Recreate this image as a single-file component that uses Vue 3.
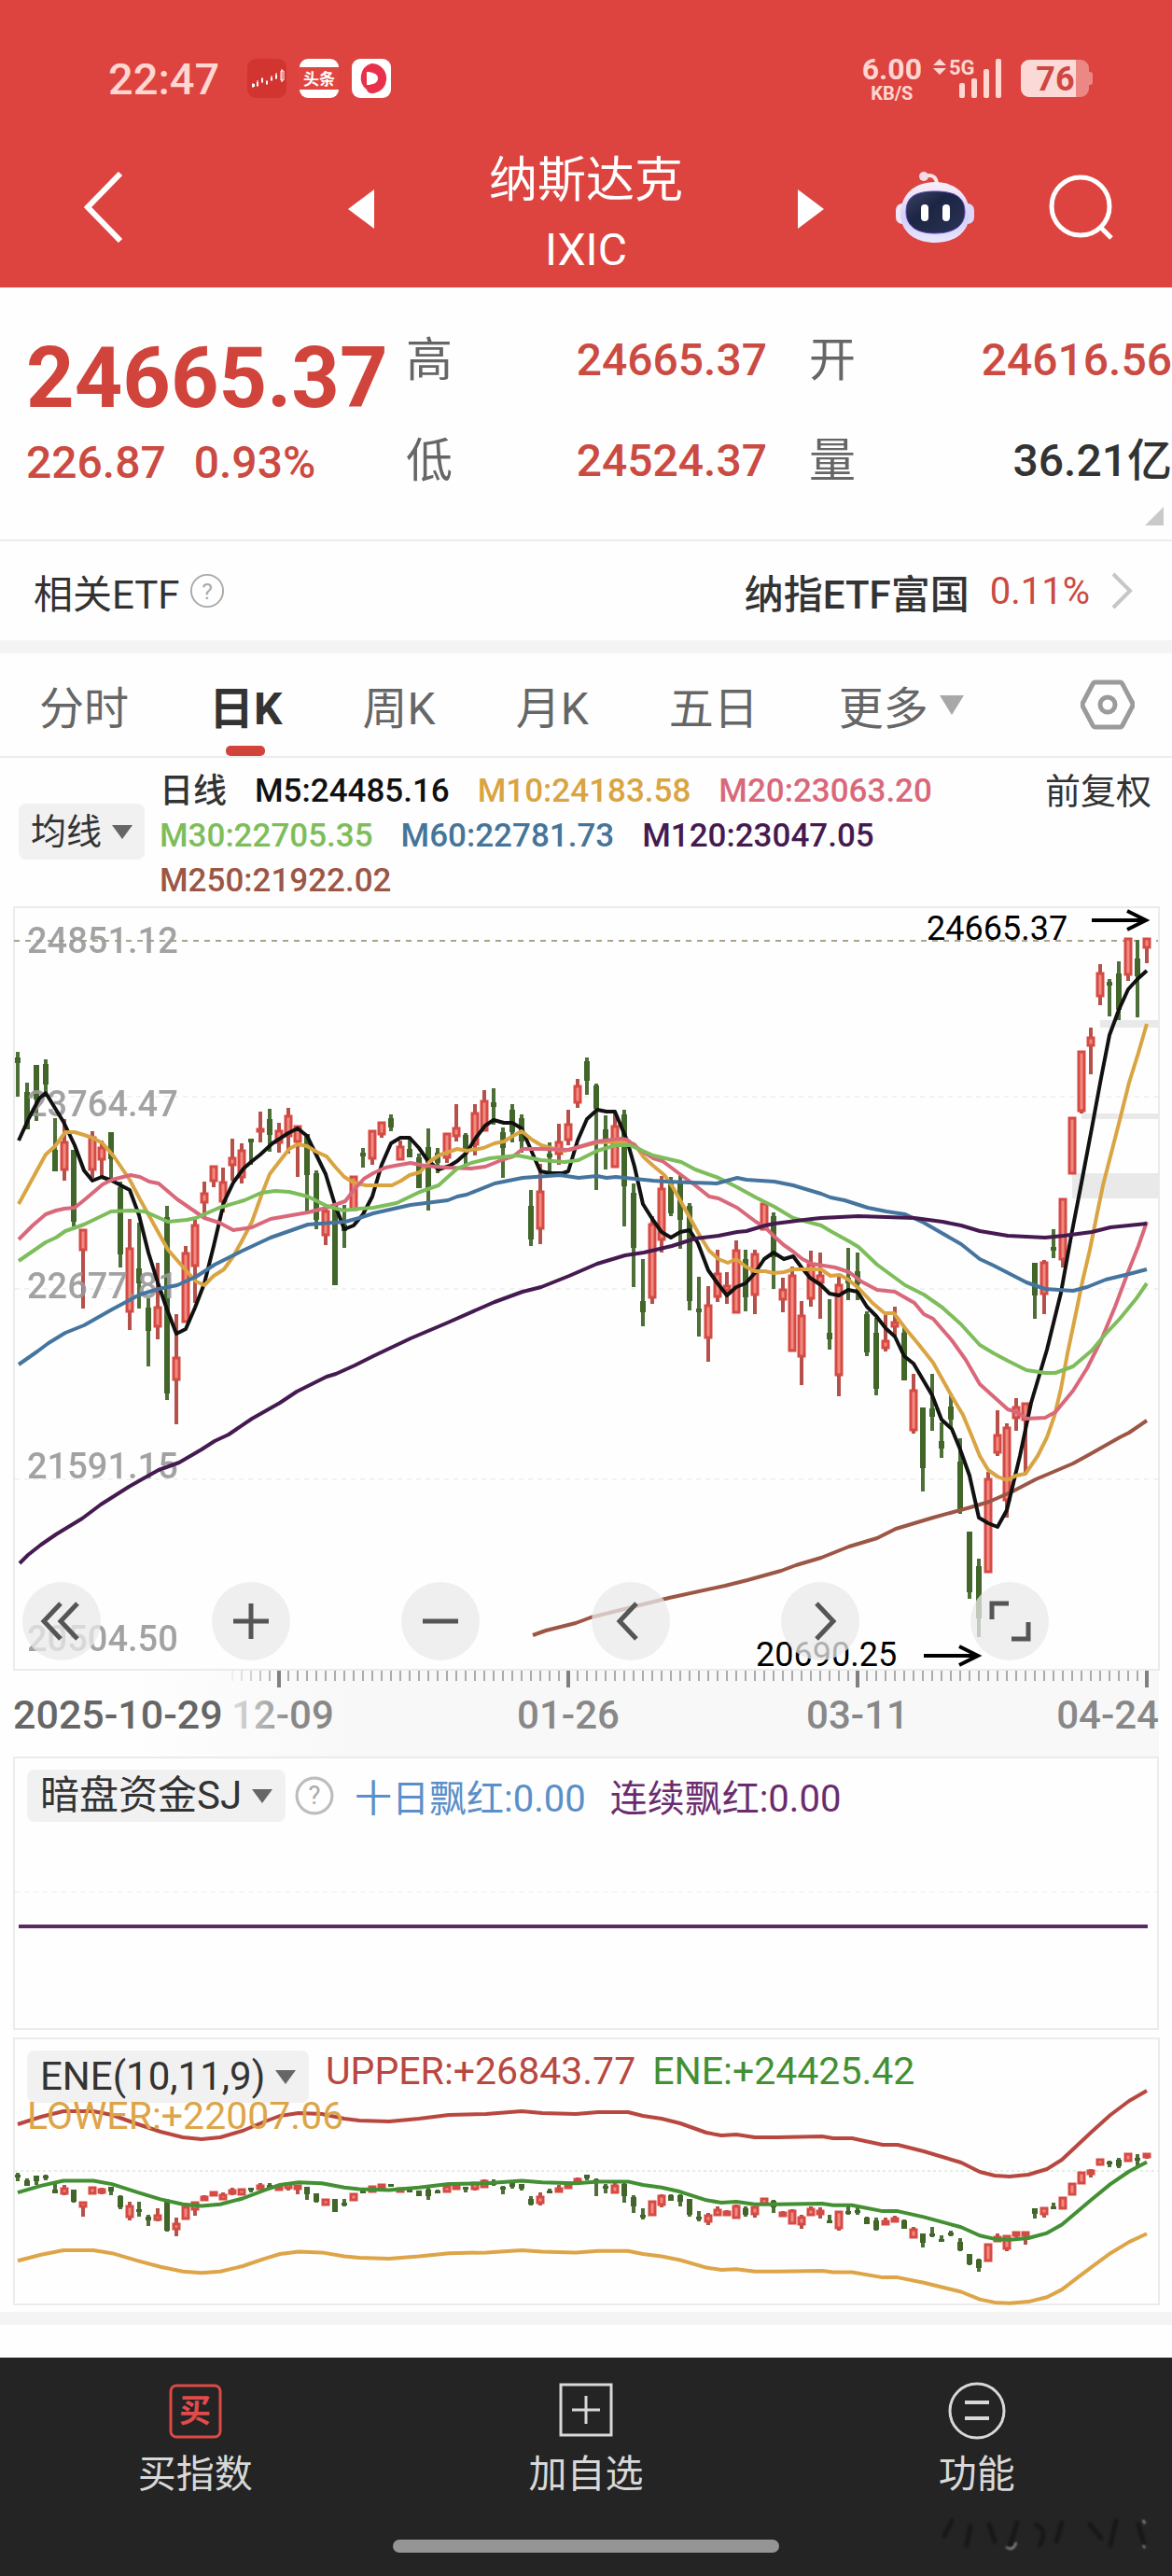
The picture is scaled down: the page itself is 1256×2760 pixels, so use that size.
<script setup>
import { ref, computed } from 'vue'

const tabs = ref(['分时', '日K', '周K', '月K', '五日'])
const activeTab = ref('日K')

const averages = ref([
  { label: 'M5:24485.16', color: '#111111' },
  { label: 'M10:24183.58', color: '#d9a441' },
  { label: 'M20:23063.20', color: '#d9687a' },
  { label: 'M30:22705.35', color: '#7dbd5b' },
  { label: 'M60:22781.73', color: '#45759a' },
  { label: 'M120:23047.05', color: '#451a50' },
  { label: 'M250:21922.02', color: '#9c5645' },
])

const priceLabels = [
  { text: '24851.12', y: 61 },
  { text: '23764.47', y: 236 },
  { text: '22677.81', y: 431 },
  { text: '21591.15', y: 624 },
  { text: '20504.50', y: 809 },
]

// Each candle: [up, high, body top, body bottom, low] in chart units
const rawCandles = [
  [0, 167, 173, 179, 215], [0, 200, 210, 250, 250], [0, 181, 181, 218, 241], [0, 175, 180, 202, 210],
  [0, 238, 272, 295, 295], [1, 239, 263, 294, 305], [0, 272, 272, 349, 354], [1, 357, 357, 380, 442],
  [1, 252, 258, 294, 302], [1, 262, 269, 283, 300], [0, 253, 253, 282, 306], [0, 306, 312, 384, 398],
  [1, 346, 377, 446, 465], [0, 350, 399, 415, 442], [0, 431, 441, 466, 504], [1, 393, 440, 462, 475],
  [0, 332, 344, 533, 540], [1, 448, 494, 519, 566], [1, 375, 382, 457, 457], [1, 346, 352, 397, 436],
  [1, 306, 318, 329, 344], [1, 289, 289, 306, 312], [1, 291, 306, 328, 339], [1, 260, 280, 289, 305],
  [1, 265, 272, 302, 308], [0, 260, 260, 264, 288], [1, 231, 249, 253, 264], [0, 228, 239, 256, 274],
  [1, 243, 251, 265, 275], [1, 227, 235, 258, 276], [1, 246, 246, 264, 301], [0, 255, 255, 299, 339],
  [0, 294, 297, 347, 357], [1, 331, 337, 364, 374], [0, 331, 331, 417, 417], [0, 331, 352, 359, 377],
  [1, 300, 300, 337, 337], [0, 270, 275, 278, 291], [1, 251, 251, 282, 288], [1, 242, 242, 256, 259],
  [0, 234, 238, 248, 252], [1, 262, 268, 283, 283], [0, 260, 271, 280, 280], [0, 276, 280, 313, 313],
  [0, 249, 269, 315, 337], [0, 270, 275, 286, 297], [1, 254, 254, 281, 286], [1, 223, 248, 258, 263],
  [0, 254, 256, 271, 288], [1, 223, 232, 267, 278], [1, 208, 219, 252, 252], [0, 206, 221, 226, 245],
  [0, 248, 253, 270, 302], [0, 223, 229, 253, 264], [0, 234, 238, 263, 275], [0, 315, 332, 368, 375],
  [1, 287, 316, 357, 373], [0, 264, 276, 279, 295], [1, 244, 263, 277, 288], [1, 229, 244, 262, 267],
  [1, 196, 203, 222, 227], [0, 173, 177, 198, 213], [0, 201, 203, 228, 315], [0, 235, 250, 265, 293],
  [1, 232, 246, 291, 291], [0, 229, 234, 311, 354], [0, 308, 318, 377, 419], [0, 389, 434, 446, 461],
  [1, 343, 351, 431, 437], [1, 300, 313, 369, 382], [0, 301, 308, 340, 343], [0, 299, 308, 347, 378],
  [0, 329, 332, 434, 444], [0, 408, 442, 444, 472], [1, 418, 438, 474, 499], [1, 379, 404, 430, 435],
  [1, 403, 417, 423, 437], [1, 369, 379, 447, 447], [0, 379, 389, 430, 445], [1, 379, 383, 428, 448],
  [1, 329, 329, 358, 358], [0, 339, 343, 387, 421], [1, 409, 421, 433, 446], [1, 397, 406, 488, 488],
  [1, 434, 449, 494, 524], [1, 380, 394, 432, 440], [1, 382, 406, 415, 453], [0, 432, 468, 475, 486],
  [1, 408, 416, 514, 536], [0, 377, 409, 415, 433], [0, 382, 402, 416, 433], [0, 445, 448, 489, 493],
  [0, 452, 468, 528, 535], [1, 449, 476, 485, 488], [1, 440, 456, 462, 472], [0, 462, 468, 519, 519],
  [1, 512, 529, 573, 576], [0, 548, 548, 613, 638], [0, 512, 549, 558, 573], [0, 564, 584, 592, 602],
  [0, 533, 547, 561, 570], [0, 581, 606, 658, 662], [0, 681, 681, 746, 753], [0, 710, 718, 774, 794],
  [1, 617, 624, 725, 725], [1, 551, 577, 597, 600], [1, 565, 569, 648, 666], [1, 538, 547, 560, 573],
  [1, 543, 543, 562, 620], [0, 393, 393, 428, 453], [1, 390, 392, 427, 448], [0, 357, 376, 378, 388],
  [1, 324, 324, 390, 398], [1, 237, 237, 298, 298], [1, 166, 166, 231, 233], [1, 141, 151, 161, 191],
  [1, 73, 82, 108, 117], [0, 89, 92, 95, 129], [0, 70, 83, 122, 133], [1, 45, 45, 85, 91],
  [0, 47, 67, 86, 130], [1, 45, 45, 56, 72],
]

const candles = computed(() =>
  rawCandles.map(([up, high, top, bottom, low], i) => ({
    x: 19 + i * 10,
    up: up === 1,
    high,
    top,
    bottom: Math.max(bottom, top + 4),
    low,
  })),
)

// Same candles squeezed into the lower indicator panel
const miniY = (y) => Math.round(137 + (y - 45) * 0.168)
const miniCandles = computed(() =>
  candles.value.map((c) => ({
    x: c.x,
    up: c.up,
    high: miniY(c.high),
    top: miniY(c.top),
    bottom: Math.max(miniY(c.bottom), miniY(c.top) + 3),
    low: miniY(c.low),
  })),
)

const averageLines = [
  {
    color: '#9c5645',
    points:
      '571,792 585,787 601,783 617,779 633,773 653,768 709,754 717,752 777,739 801,733 837,723 853,717 880,709 910,697 940,688 960,678 1000,666 1040,655 1060,649 1085,638 1110,625 1150,608 1170,597 1200,580 1210,575 1229,562',
  },
  {
    color: '#111111',
    points:
      '20,262 31,238 42,217 49,211 68,242 80,267 90,294 99,305 109,301 120,305 139,315 149,342 159,382 169,414 179,443 189,469 199,464 209,441 219,415 229,375 240,328 250,307 261,292 269,285 279,277 292,265 309,254 319,249 329,257 349,298 359,331 369,357 379,353 389,341 399,322 409,288 419,265 429,259 439,259 449,270 458,283 470,293 482,289 490,284 500,275 510,259 520,246 529,240 540,243 549,243 559,249 569,272 579,295 590,297 603,297 609,295 619,262 629,239 640,229 650,231 659,231 672,262 680,290 689,330 699,346 709,360 719,366 729,360 739,358 748,372 759,401 769,415 779,428 789,419 799,415 809,404 819,389 829,382 840,389 850,386 859,398 868,409 880,417 889,426 899,428 909,422 919,424 929,440 939,450 949,463 959,472 969,493 979,501 989,518 999,535 1009,561 1020,571 1029,593 1039,621 1049,666 1059,672 1069,676 1079,658 1093,600 1105,543 1122,486 1137,425 1148,364 1160,302 1170,249 1180,195 1189,149 1199,122 1209,100 1219,89 1229,80',
  },
  {
    color: '#d9a441',
    points:
      '20,330 38,297 49,277 59,268 70,253 80,253 90,256 99,259 110,265 122,279 139,304 150,325 160,343 170,361 180,379 200,402 210,413 219,417 229,407 240,400 250,386 259,370 270,349 280,321 289,298 299,285 310,271 319,266 329,268 339,274 350,279 359,290 369,301 379,307 392,310 420,310 430,305 439,299 450,296 460,285 470,278 490,271 500,273 518,270 530,265 540,263 550,257 559,252 570,261 580,267 590,270 605,273 640,264 670,263 680,266 690,280 700,289 712,299 721,312 730,328 740,346 750,364 760,380 770,389 780,393 789,389 799,397 809,402 820,402 829,404 840,403 850,400 880,400 890,407 900,406 909,411 920,420 935,436 948,447 958,447 970,463 985,481 1000,500 1010,518 1020,536 1032,556 1042,580 1050,600 1059,615 1069,622 1079,626 1089,621 1099,619 1112,600 1122,580 1130,557 1137,528 1144,490 1152,452 1160,413 1168,379 1175,344 1182,310 1190,279 1200,240 1210,200 1220,168 1229,137',
  },
  {
    color: '#d9687a',
    points:
      '20,368 35,353 49,341 60,337 69,335 80,334 90,326 110,309 120,304 140,299 150,301 160,306 170,308 190,325 219,345 235,350 250,358 270,355 290,346 330,339 350,334 370,327 380,314 390,303 400,297 413,291 423,289 440,286 455,289 480,291 505,292 520,290 540,282 550,279 560,271 580,271 610,272 620,269 640,263 665,260 672,261 683,270 700,281 710,284 730,299 745,310 760,322 770,324 790,334 810,349 820,355 830,365 840,374 850,381 860,389 870,394 895,398 910,403 923,413 940,422 959,424 980,436 990,448 1000,453 1020,476 1035,497 1050,523 1080,550 1090,553 1100,560 1120,559 1131,553 1150,530 1165,506 1180,476 1195,440 1210,400 1220,375 1229,349',
  },
  {
    color: '#7dbd5b',
    points:
      '20,391 49,371 60,366 70,359 90,352 119,338 140,337 155,338 180,349 200,347 210,345 235,334 262,326 280,318 295,316 310,317 330,322 350,332 368,337 385,335 400,334 425,329 450,317 470,310 490,292 505,286 525,281 555,278 580,283 605,285 620,283 640,273 660,267 675,267 700,278 730,285 745,293 770,302 790,312 810,323 830,333 850,345 880,353 890,359 910,370 920,376 940,395 970,417 990,427 1010,441 1030,459 1050,481 1065,490 1080,498 1100,508 1120,511 1131,511 1150,504 1170,487 1185,469 1200,453 1218,431 1229,415',
  },
  {
    color: '#45759f',
    points:
      '20,502 40,488 52,479 70,468 90,460 120,443 150,427 170,421 190,417 210,408 230,395 260,380 290,366 330,352 370,349 385,345 400,340 440,331 480,326 490,322 500,320 530,308 560,302 600,299 620,302 640,300 650,302 660,301 700,305 715,306 740,307 768,308 790,302 800,304 830,306 850,310 880,319 890,323 905,326 930,334 950,338 970,341 990,350 1030,373 1050,389 1065,396 1100,414 1120,421 1150,423 1165,419 1185,411 1210,405 1229,400',
  },
  {
    color: '#451a50',
    points:
      '21,715 30,706 44,695 60,684 88,667 108,652 138,633 152,625 170,615 192,607 216,593 230,584 245,577 270,560 300,543 318,531 350,515 360,512 380,503 400,493 440,474 480,457 530,435 560,424 580,419 610,407 640,394 670,385 690,382 720,375 745,367 770,364 790,360 800,359 820,353 830,351 870,346 880,345 920,343 950,344 980,345 1010,349 1030,353 1050,359 1080,364 1120,366 1140,364 1170,360 1190,355 1229,351',
  },
]

const upperBand = [
  [19, 105], [44, 97], [68, 91], [100, 91], [120, 95], [148, 105], [172, 113], [196, 119], [216, 121],
  [236, 119], [260, 112], [284, 102], [300, 96], [320, 93], [345, 94], [369, 99], [385, 101], [417, 102],
  [449, 99], [481, 95], [521, 94], [559, 91], [581, 93], [617, 94], [641, 92], [673, 92], [689, 96],
  [709, 99], [729, 104], [757, 114], [773, 117], [789, 116], [809, 119], [833, 119], [881, 118],
  [893, 120], [913, 120], [946, 127], [962, 127], [990, 134], [1030, 146], [1050, 156], [1066, 160],
  [1082, 161], [1102, 159], [1122, 153], [1138, 143], [1154, 128], [1170, 113], [1190, 95], [1210, 80],
  [1229, 69],
]

// The three bands are percentages of one average, so the gap narrows as price falls
const band = (step) =>
  upperBand.map(([x, y]) => `${x},${(y + step * (74.3 - 0.095 * (y - 93))).toFixed(1)}`).join(' ')

const bands = computed(() => [
  { color: '#b8483f', points: band(0) },
  { color: '#438f33', points: band(1) },
  { color: '#dda548', points: band(2) },
])

// Axis ticks, one per candle, fading in from the left
const ticks = computed(() => {
  const list = []
  for (let x = 249; x <= 1229; x += 10) {
    const major = (x - 299) % 310 === 0
    list.push({ x, major, opacity: Math.min(1, (x - 239) / 60) })
  }
  return list
})
</script>

<template>
  <div class="page">
    <header class="header">
      <div class="status">
        <div class="status-left">
          <span class="clock">22:47</span>
          <svg class="app-icon" viewBox="0 0 42 42">
            <rect width="42" height="42" rx="9" fill="#d2352f" />
            <g fill="#fff" stroke="#fff">
              <path d="M6 26v5M11 23v7M16 20v6M21 23v5M26 18v6M31 15v7M37 11v14" stroke-width="1" />
              <path d="M5 27h3v3h-3zM10 25h2v4h-2zM15 21h2v4h-2zM20 24h2v3h-2zM25 20h2v3h-2zM30 17h2v4h-2z" stroke="none" />
              <path d="M36 13h3v10h-3z" fill="none" stroke-width="1" />
            </g>
          </svg>
          <svg class="app-icon" viewBox="0 0 42 42">
            <rect width="42" height="42" rx="9" fill="#fff" />
            <rect y="9" width="42" height="24" fill="#e0463f" />
            <text x="21" y="28" text-anchor="middle" class="icon-text">头条</text>
          </svg>
          <svg class="app-icon" viewBox="0 0 42 42">
            <rect width="42" height="42" rx="9" fill="#fff" />
            <path d="M21 5a16 16 0 0 1 8 30c-6 3-12 3-13-2A16 16 0 0 1 21 5z" fill="#e8304a" />
            <path d="M16 14c6 0 12 2 12 7s-6 7-12 7z" fill="#fff" />
          </svg>
        </div>
        <div class="status-right">
          <div class="speed">
            <span class="speed-num">6.00</span>
            <span class="speed-unit">KB/S</span>
          </div>
          <svg class="signal" viewBox="0 -6 74 56">
            <path d="M0 8l7-7 7 7zM0 11l7 7 7-7z" fill="#ffd6d1" />
            <text x="17" y="18" class="net-text">5G</text>
            <g fill="#ffd6d1">
              <rect x="28" y="27" width="6" height="16" rx="2" />
              <rect x="41" y="22" width="6" height="21" rx="2" />
              <rect x="54" y="12" width="6" height="31" rx="2" />
              <rect x="67" y="1" width="6" height="42" rx="2" />
            </g>
          </svg>
          <svg class="battery" viewBox="0 -6 78 52">
            <path d="M9 0h55a9 9 0 0 1 9 9v4h1a3 3 0 0 1 3 3v8a3 3 0 0 1-3 3h-1v4a9 9 0 0 1-9 9H9a9 9 0 0 1-9-9V9a9 9 0 0 1 9-9z" fill="#eb8883" />
            <path d="M9 0h50v40H9a9 9 0 0 1-9-9V9a9 9 0 0 1 9-9z" fill="#fbd9d6" />
            <text x="37" y="33" text-anchor="middle" class="battery-text">76</text>
          </svg>
        </div>
      </div>

      <nav class="navbar">
        <div class="nav-side">
          <button class="icon-btn" aria-label="返回">
            <svg width="42" height="76" viewBox="0 0 42 76">
              <path d="M39 2L4 38l35 36" fill="none" stroke="#fff" stroke-width="6" />
            </svg>
          </button>
        </div>
        <div class="nav-title">
          <button class="icon-btn nav-arrow" aria-label="上一个">
            <svg width="28" height="42" viewBox="0 0 28 42"><path d="M28 0v42L0 21z" fill="#fff" /></svg>
          </button>
          <h1 class="title">
            <span>纳斯达克</span>
            <span class="code">IXIC</span>
          </h1>
          <button class="icon-btn nav-arrow" aria-label="下一个">
            <svg width="28" height="42" viewBox="0 0 28 42"><path d="M0 0v42l28-21z" fill="#fff" /></svg>
          </button>
        </div>
        <div class="nav-side nav-end">
          <button class="icon-btn" aria-label="智能助手">
            <svg width="84" height="78" viewBox="0 0 84 78">
              <defs>
                <linearGradient id="shell" x1="0" y1="0" x2="0" y2="1">
                  <stop offset="0" stop-color="#fbeef6" />
                  <stop offset="0.6" stop-color="#d3d0f7" />
                  <stop offset="1" stop-color="#e9e6ff" />
                </linearGradient>
                <linearGradient id="visor" x1="0" y1="0" x2="1" y2="1">
                  <stop offset="0" stop-color="#3a4364" />
                  <stop offset="0.4" stop-color="#1d2544" />
                  <stop offset="1" stop-color="#2b3355" />
                </linearGradient>
              </defs>
              <path d="M31 6c8-3 13 1 13 9" fill="none" stroke="#fbe3ea" stroke-width="4" />
              <circle cx="30" cy="6" r="5" fill="#f6dbe6" />
              <rect x="0" y="35" width="16" height="22" rx="7" fill="#efe6f8" />
              <rect x="68" y="35" width="16" height="22" rx="7" fill="#dcd8fb" />
              <path d="M42 12c22 0 37 14 37 34 0 19-15 31-37 31S5 65 5 46c0-20 15-34 37-34z" fill="url(#shell)" />
              <path d="M42 22c21 0 32 6 32 22 0 15-12 23-32 23S11 59 11 44c0-16 10-22 31-22z" fill="url(#visor)" stroke="#5b45b8" stroke-width="1" />
              <rect x="27" y="36" width="8" height="18" rx="4" fill="#fff" />
              <rect x="50" y="36" width="8" height="18" rx="4" fill="#fff" />
            </svg>
          </button>
          <button class="icon-btn" aria-label="搜索">
            <svg width="70" height="70" viewBox="0 0 70 70">
              <circle cx="34" cy="34" r="31" fill="none" stroke="#fff" stroke-width="5" />
              <path d="M55 56l12 12" stroke="#fff" stroke-width="5" />
            </svg>
          </button>
        </div>
      </nav>
    </header>

    <section class="quote">
      <div class="quote-main">
        <strong class="price">24665.37</strong>
        <div class="change"><span>226.87</span><span>0.93%</span></div>
      </div>
      <dl class="quote-col">
        <div><dt>高</dt><dd>24665.37</dd></div>
        <div><dt>低</dt><dd>24524.37</dd></div>
      </dl>
      <dl class="quote-col">
        <div><dt>开</dt><dd>24616.56</dd></div>
        <div><dt>量</dt><dd class="dark">36.21亿</dd></div>
      </dl>
      <svg class="expand" viewBox="0 0 20 20"><path d="M20 0v20H0z" fill="#c9c9c9" /></svg>
    </section>

    <a href="#" class="etf">
      <span class="etf-label">相关ETF</span>
      <svg class="help" width="38" height="38" viewBox="0 0 40 40">
        <circle cx="20" cy="20" r="18" fill="none" stroke="#a9a9a9" stroke-width="2" />
        <text x="20" y="29" text-anchor="middle" class="help-text">?</text>
      </svg>
      <span class="etf-name">纳指ETF富国</span>
      <span class="etf-change">0.11%</span>
      <svg width="24" height="40" viewBox="0 0 24 40">
        <path d="M3 2l18 18L3 38" fill="none" stroke="#c6c6c6" stroke-width="4" />
      </svg>
    </a>

    <nav class="tabs">
      <button
        v-for="tab in tabs"
        :key="tab"
        class="tab"
        :class="{ active: tab === activeTab }"
        @click="activeTab = tab"
      >
        {{ tab }}
      </button>
      <button class="tab more">
        更多
        <svg width="26" height="21" viewBox="0 0 26 21"><path d="M0 0h26L13 21z" fill="#a8a8a8" /></svg>
      </button>
      <button class="tab settings" aria-label="设置">
        <svg width="58" height="54" viewBox="0 0 58 54">
          <path d="M16 3h26q2 0 3 2l10 19q2 3 0 6L45 49q-1 2-3 2H16q-2 0-3-2L3 30q-2-3 0-6L13 5q1-2 3-2z" fill="none" stroke="#9b9b9b" stroke-width="5" />
          <circle cx="29" cy="27" r="8" fill="none" stroke="#9b9b9b" stroke-width="5" />
        </svg>
      </button>
    </nav>

    <section class="legend">
      <label class="pill pill-ma">
        <select aria-label="指标"><option>均线</option></select>
        <svg width="22" height="15" viewBox="0 0 22 15"><path d="M0 0h22L11 15z" fill="#666" /></svg>
      </label>
      <div class="legend-items">
        <span class="period">日线</span>
        <span v-for="item in averages" :key="item.label" :style="{ color: item.color }">{{ item.label }}</span>
      </div>
      <span class="adjust">前复权</span>
    </section>

    <!-- Daily K chart -->
    <section class="chart">
      <svg class="plot" viewBox="0 10 1256 912">
        <defs>
          <linearGradient id="axisFade" x1="0" y1="0" x2="1" y2="0">
            <stop offset="0.1" stop-color="#f8f8f8" stop-opacity="0" />
            <stop offset="0.3" stop-color="#f8f8f8" />
          </linearGradient>
          <linearGradient id="dateFade" x1="0" y1="0" x2="1" y2="0">
            <stop offset="0" stop-color="#888" stop-opacity="0.25" />
            <stop offset="0.6" stop-color="#888" />
          </linearGradient>
        </defs>
        <rect x="15" y="830" width="1227" height="92" fill="url(#axisFade)" />
        <rect x="15" y="12" width="1227" height="817" fill="none" stroke="#ebebeb" stroke-width="2" />
        <g stroke="#e3e6e6" stroke-width="1" stroke-dasharray="5 5">
          <path d="M16 215H1241M16 421H1241M16 625H1241" />
        </g>
        <path d="M15 48H1241" stroke="#a9a488" stroke-width="2" stroke-dasharray="6 6" />
        <g fill="#e9e9e9">
          <rect x="1179" y="133" width="63" height="8" />
          <rect x="1159" y="233" width="83" height="6" />
          <rect x="1149" y="297" width="93" height="27" />
        </g>

        <g v-for="c in candles" :key="c.x" :class="c.up ? 'up' : 'down'">
          <line :x1="c.x" :x2="c.x" :y1="c.high" :y2="c.low" class="wick" />
          <rect v-if="c.up" :x="c.x - 3" :y="c.top + 1" width="6" :height="c.bottom - c.top - 2" class="body" />
          <rect v-else :x="c.x - 3" :y="c.top" width="6" :height="c.bottom - c.top" class="body" />
        </g>

        <text v-for="p in priceLabels" :key="p.text" x="29" :y="p.y" class="price-label">{{ p.text }}</text>

        <polyline v-for="line in averageLines" :key="line.color" :points="line.points" :stroke="line.color" class="line" />

        <text x="993" y="47" class="mark">24665.37</text>
        <path d="M1170 26h57M1208 16l20 10-20 10" class="arrow" />
        <text x="810" y="825" class="mark">20690.25</text>
        <path d="M990 814h57M1028 804l20 10-20 10" class="arrow" />

        <line
          v-for="t in ticks"
          :key="t.x"
          :x1="t.x"
          :x2="t.x"
          y1="830"
          :y2="t.major ? 848 : 841"
          :stroke-width="t.major ? 4 : 2"
          :stroke="t.major ? '#808080' : '#ababab'"
          :opacity="t.opacity"
        />
        <text x="14" y="892" class="date first">2025-10-29</text>
        <text x="248" y="892" class="date fade">12-09</text>
        <text x="609" y="892" text-anchor="middle" class="date">01-26</text>
        <text x="919" y="892" text-anchor="middle" class="date">03-11</text>
        <text x="1242" y="892" text-anchor="end" class="date">04-24</text>
      </svg>

      <div class="tools">
        <button class="tool" aria-label="最早">
          <svg viewBox="0 0 84 84"><path d="M41 23L23 42l18 19M59 23L41 42l18 19" /></svg>
        </button>
        <button class="tool" aria-label="放大">
          <svg viewBox="0 0 84 84"><path d="M42 23v38M23 42h38" /></svg>
        </button>
        <button class="tool" aria-label="缩小">
          <svg viewBox="0 0 84 84"><path d="M23 42h38" /></svg>
        </button>
        <button class="tool" aria-label="向左">
          <svg viewBox="0 0 84 84"><path d="M48 23L30 42l18 19" /></svg>
        </button>
        <button class="tool" aria-label="向右">
          <svg viewBox="0 0 84 84"><path d="M38 23l18 19-18 19" /></svg>
        </button>
        <button class="tool" aria-label="全屏">
          <svg viewBox="0 0 84 84"><path d="M23 40V23h18M44 61h18V43" /></svg>
        </button>
      </div>
    </section>

    <!-- Fund flow indicator -->
    <section class="panel">
      <div class="panel-head">
        <label class="pill">
          <select aria-label="副图指标"><option>暗盘资金SJ</option></select>
          <svg width="22" height="15" viewBox="0 0 22 15"><path d="M0 0h22L11 15z" fill="#666" /></svg>
        </label>
        <svg class="help" width="42" height="42" viewBox="0 0 40 40">
          <circle cx="20" cy="20" r="18" fill="none" stroke="#bdbdbd" stroke-width="3" />
          <text x="20" y="29" text-anchor="middle" class="help-text">?</text>
        </svg>
        <span class="ten">十日飘红:0.00</span>
        <span class="streak">连续飘红:0.00</span>
      </div>
      <svg class="plot" viewBox="0 0 1223 220">
        <path d="M0 74H1223" stroke="#ececec" stroke-width="1" stroke-dasharray="5 5" />
        <path d="M4 111H1213" stroke="#5a2a63" stroke-width="4" />
      </svg>
    </section>

    <!-- ENE indicator -->
    <section class="chart">
      <svg class="plot" viewBox="0 4 1256 302">
        <rect x="15" y="13" width="1227" height="285" fill="none" stroke="#ebebeb" stroke-width="2" />
        <path d="M16 155H1241" stroke="#c9e0c0" stroke-width="1" stroke-dasharray="3 3" />
        <g v-for="c in miniCandles" :key="c.x" :class="c.up ? 'up' : 'down'">
          <line :x1="c.x" :x2="c.x" :y1="c.high" :y2="c.low" class="wick" />
          <rect :x="c.x - 3" :y="c.top" width="6" :height="c.bottom - c.top" class="body" />
        </g>
        <polyline v-for="b in bands" :key="b.color" :points="b.points" :stroke="b.color" class="line" />
      </svg>
      <div class="ene-head">
        <label class="pill">
          <select aria-label="副图指标"><option>ENE(10,11,9)</option></select>
          <svg width="22" height="15" viewBox="0 0 22 15"><path d="M0 0h22L11 15z" fill="#666" /></svg>
        </label>
        <span class="upper">UPPER:+26843.77</span>
        <span class="ene">ENE:+24425.42</span>
        <span class="lower">LOWER:+22007.06</span>
      </div>
    </section>

    <div class="divider"></div>

    <footer class="footer">
      <div class="actions">
        <button class="action">
          <svg width="62" height="62" viewBox="0 0 62 62">
            <rect x="5" y="4" width="53" height="55" rx="6" fill="none" stroke="#dc4a44" stroke-width="3" />
            <text x="31" y="43" text-anchor="middle" class="buy-text">买</text>
          </svg>
          <span>买指数</span>
        </button>
        <button class="action">
          <svg width="62" height="62" viewBox="0 0 62 62">
            <rect x="4" y="3" width="54" height="54" fill="none" stroke="#d8d8d8" stroke-width="3" />
            <path d="M31 15v30M16 30h30" stroke="#d8d8d8" stroke-width="3" />
          </svg>
          <span>加自选</span>
        </button>
        <button class="action">
          <svg width="62" height="62" viewBox="0 0 62 62">
            <circle cx="31" cy="31" r="29" fill="none" stroke="#d8d8d8" stroke-width="3" />
            <path d="M18 22h26M18 39h26" stroke="#d8d8d8" stroke-width="4" />
          </svg>
          <span>功能</span>
        </button>
      </div>
      <div class="home-bar"></div>
      <!-- Faint embossed stamp in the corner -->
      <svg class="stamp" viewBox="0 0 232 42">
        <g fill="none" stroke="#181818" stroke-width="5" stroke-linecap="round">
          <path d="M22 8L14 24M42 14l-4 20M62 12l6 18M92 10l-8 26M112 12q14 6 4 22M140 10l-6 20M170 12l12 14M198 8l-6 26M222 12l6 20" />
        </g>
        <path d="M80 36q8 5 11-5M227 7l2 4M227 34l2 3" fill="none" stroke="#a0a0a0" stroke-width="2" />
      </svg>
    </footer>
  </div>
</template>

<style>
body {
  background: #fefefe;
}
</style>

<style scoped>
/* General Layout */
.page {
  font-family: Roboto, 'Noto Sans CJK SC', sans-serif;
  color: #333;
  background: #fefefe;
}

svg {
  display: block;
  flex-shrink: 0;
}

button {
  border: none;
  background: none;
  padding: 0;
  font-family: inherit;
  color: inherit;
  cursor: pointer;
}

/* Header */
.header {
  background: #dd443f;
  color: #fff;
  padding-bottom: 12px;
}

.status {
  display: flex;
  justify-content: space-between;
  align-items: center;
  height: 166px;
  padding: 2px 84px 0 116px;
  box-sizing: border-box;
  color: #ffd6d1;
}

.status-left {
  display: flex;
  align-items: center;
  gap: 14px;
}

.clock {
  font-size: 47px;
  font-weight: 500;
  margin-right: 16px;
}

.app-icon {
  width: 42px;
  height: 42px;
}

.icon-text {
  font-size: 17px;
  font-weight: 700;
  fill: #fff;
}

.status-right {
  display: flex;
  align-items: center;
}

.speed {
  display: flex;
  flex-direction: column;
  align-items: center;
  font-weight: 700;
  margin-right: 12px;
}

.speed-num {
  font-size: 32px;
  line-height: 32px;
}

.speed-unit {
  font-size: 20px;
  line-height: 20px;
}

.signal {
  width: 74px;
  height: 56px;
  margin-right: 20px;
}

.net-text {
  font-size: 22px;
  font-weight: 700;
  fill: #ffd6d1;
}

.battery {
  width: 78px;
  height: 52px;
}

.battery-text {
  font-size: 36px;
  font-weight: 700;
  fill: #cf4742;
}

.navbar {
  display: grid;
  grid-template-columns: 1fr 510px 1fr;
  align-items: center;
}

.nav-side {
  display: flex;
  align-items: center;
  padding: 0 0 18px 90px;
}

.nav-end {
  justify-content: flex-end;
  gap: 80px;
  padding: 0 62px 18px 0;
}

.nav-title {
  display: flex;
  justify-content: space-between;
  align-items: center;
}

.nav-arrow {
  padding-bottom: 14px;
}

.title {
  display: flex;
  flex-direction: column;
  align-items: center;
  gap: 18px;
  margin: 0;
  font-size: 52px;
  line-height: 56px;
  font-weight: 400;
}

.code {
  font-size: 48px;
}

/* Quote */
.quote {
  position: relative;
  display: grid;
  grid-template-columns: minmax(0, 390fr) minmax(0, 387fr) minmax(0, 389fr);
  column-gap: 45px;
  height: 272px;
  border-bottom: 2px solid #ececec;
  box-sizing: border-box;
  font-size: 48px;
  font-weight: 500;
  color: #cb4a42;
}

.quote-main {
  padding: 46px 0 0 28px;
  white-space: nowrap;
}

.price {
  display: block;
  font-size: 90px;
  line-height: 104px;
  font-weight: 700;
  color: #d0443c;
}

.change {
  display: flex;
  gap: 30px;
  line-height: 76px;
}

.quote-col {
  margin: 0;
  padding-top: 24px;
}

.quote-col div {
  display: flex;
  justify-content: space-between;
  line-height: 108px;
}

.quote-col dt {
  font-size: 50px;
  font-weight: 400;
  color: #666;
}

.quote-col dd {
  margin: 0;
}

.quote-col .dark {
  color: #333;
}

.expand {
  position: absolute;
  right: 9px;
  bottom: 15px;
  width: 20px;
  height: 20px;
}

/* Related ETF */
.etf {
  display: flex;
  align-items: center;
  height: 106px;
  padding: 0 42px 0 36px;
  border-bottom: 14px solid #f4f4f4;
  font-size: 42px;
  color: #333;
  text-decoration: none;
}

.etf .help {
  margin-left: 10px;
}

.help-text {
  font-size: 26px;
  fill: #a9a9a9;
}

.etf-name {
  margin-left: auto;
  font-weight: 500;
}

.etf-change {
  margin: 0 22px;
  font-size: 40px;
  color: #cb4a42;
}

/* Tabs */
.tabs {
  display: flex;
  align-items: center;
  gap: 86px;
  height: 112px;
  padding: 0 40px 0 42px;
  border-bottom: 2px solid #ececec;
  box-sizing: border-box;
}

.tab {
  position: relative;
  height: 110px;
  font-size: 48px;
  color: #666;
  white-space: nowrap;
}

.tab.active {
  font-weight: 700;
  color: #333;
}

.tab.active::after {
  content: '';
  position: absolute;
  left: 50%;
  bottom: 0;
  width: 42px;
  height: 11px;
  margin-left: -21px;
  border-radius: 5px;
  background: #d0443c;
}

.more {
  display: flex;
  align-items: center;
  gap: 12px;
}

.settings {
  margin-left: auto;
}

/* Moving average legend */
.legend {
  display: flex;
  align-items: flex-start;
  padding: 12px 22px 2px 20px;
  font-size: 35px;
  line-height: 48px;
  font-weight: 500;
}

.legend-items {
  display: flex;
  flex-wrap: wrap;
  column-gap: 30px;
  flex: 1;
  padding-left: 16px;
}

.period {
  font-size: 36px;
}

.adjust {
  font-size: 38px;
  font-weight: 400;
}

.pill {
  display: flex;
  align-items: center;
  gap: 10px;
  height: 56px;
  padding: 0 14px;
  border-radius: 8px;
  background: #f1f1f1;
}

.pill select {
  appearance: none;
  border: none;
  padding: 0;
  background: none;
  font-family: inherit;
  font-size: 42px;
  line-height: 56px;
  color: #333;
}

.pill-ma {
  height: 60px;
  margin-top: 37px;
  padding: 0 13px;
}

.pill-ma select {
  font-size: 38px;
}

/* Charts */
.chart {
  position: relative;
}

.plot {
  width: 100%;
  height: auto;
}

.wick {
  stroke-width: 4;
}

.up .wick {
  stroke: #b5504b;
}

.down .wick {
  stroke: #4d6f38;
}

.up .body {
  fill: #f28a80;
  stroke: #d64a44;
  stroke-width: 3;
}

.down .body {
  fill: #42662a;
}

.line {
  fill: none;
  stroke-width: 4;
  stroke-linejoin: round;
}

.price-label {
  font-size: 38px;
  font-weight: 500;
  fill: #999;
  opacity: 0.9;
}

.mark {
  font-size: 36px;
  fill: #000;
}

.arrow {
  fill: none;
  stroke: #000;
  stroke-width: 4;
}

.date {
  font-size: 42px;
  font-weight: 500;
  fill: #888;
}

.date.first {
  font-size: 43px;
  fill: #666;
}

.date.fade {
  fill: url(#dateFade);
}

.tools {
  position: absolute;
  left: 24px;
  right: 132px;
  bottom: 103px;
  display: flex;
  justify-content: space-between;
}

.tool {
  width: 84px;
  height: 84px;
  border-radius: 50%;
  background: rgba(233, 233, 233, 0.75);
}

.tool path {
  fill: none;
  stroke: #555;
  stroke-width: 5;
}

/* Indicator panel */
.panel {
  margin: 0 14px;
  border: 2px solid #ebebeb;
}

.panel-head {
  display: flex;
  align-items: center;
  padding: 11px 13px 0;
  font-size: 40px;
}

.panel-head .help {
  margin: 0 22px 0 10px;
}

.ten {
  color: #5b8fc9;
}

.streak {
  margin-left: 26px;
  color: #6a2c6e;
}

.ene-head {
  position: absolute;
  left: 29px;
  right: 15px;
  top: 22px;
  display: flex;
  flex-wrap: wrap;
  align-items: flex-start;
  column-gap: 18px;
  font-size: 41px;
  line-height: 44px;
}

.upper {
  color: #b8483f;
}

.ene {
  color: #438f33;
}

.lower {
  line-height: 28px;
  color: #dda548;
}

.divider {
  height: 14px;
  margin-bottom: 35px;
  background: #f4f4f4;
}

/* Footer */
.footer {
  position: relative;
  background: #242424;
  color: #d8d8d8;
  padding: 26px 0;
}

.actions {
  display: grid;
  grid-template-columns: repeat(3, 1fr);
}

.action {
  display: flex;
  flex-direction: column;
  align-items: center;
  gap: 10px;
  font-size: 41px;
  line-height: 54px;
}

.buy-text {
  font-size: 34px;
  font-weight: 700;
  fill: #e04b4b;
}

.home-bar {
  width: 33%;
  height: 14px;
  margin: 43px auto 0;
  border-radius: 7px;
  background: #959595;
}

.stamp {
  position: absolute;
  right: 26px;
  bottom: 26px;
  width: 232px;
  height: 42px;
  filter: blur(1px);
}
</style>
